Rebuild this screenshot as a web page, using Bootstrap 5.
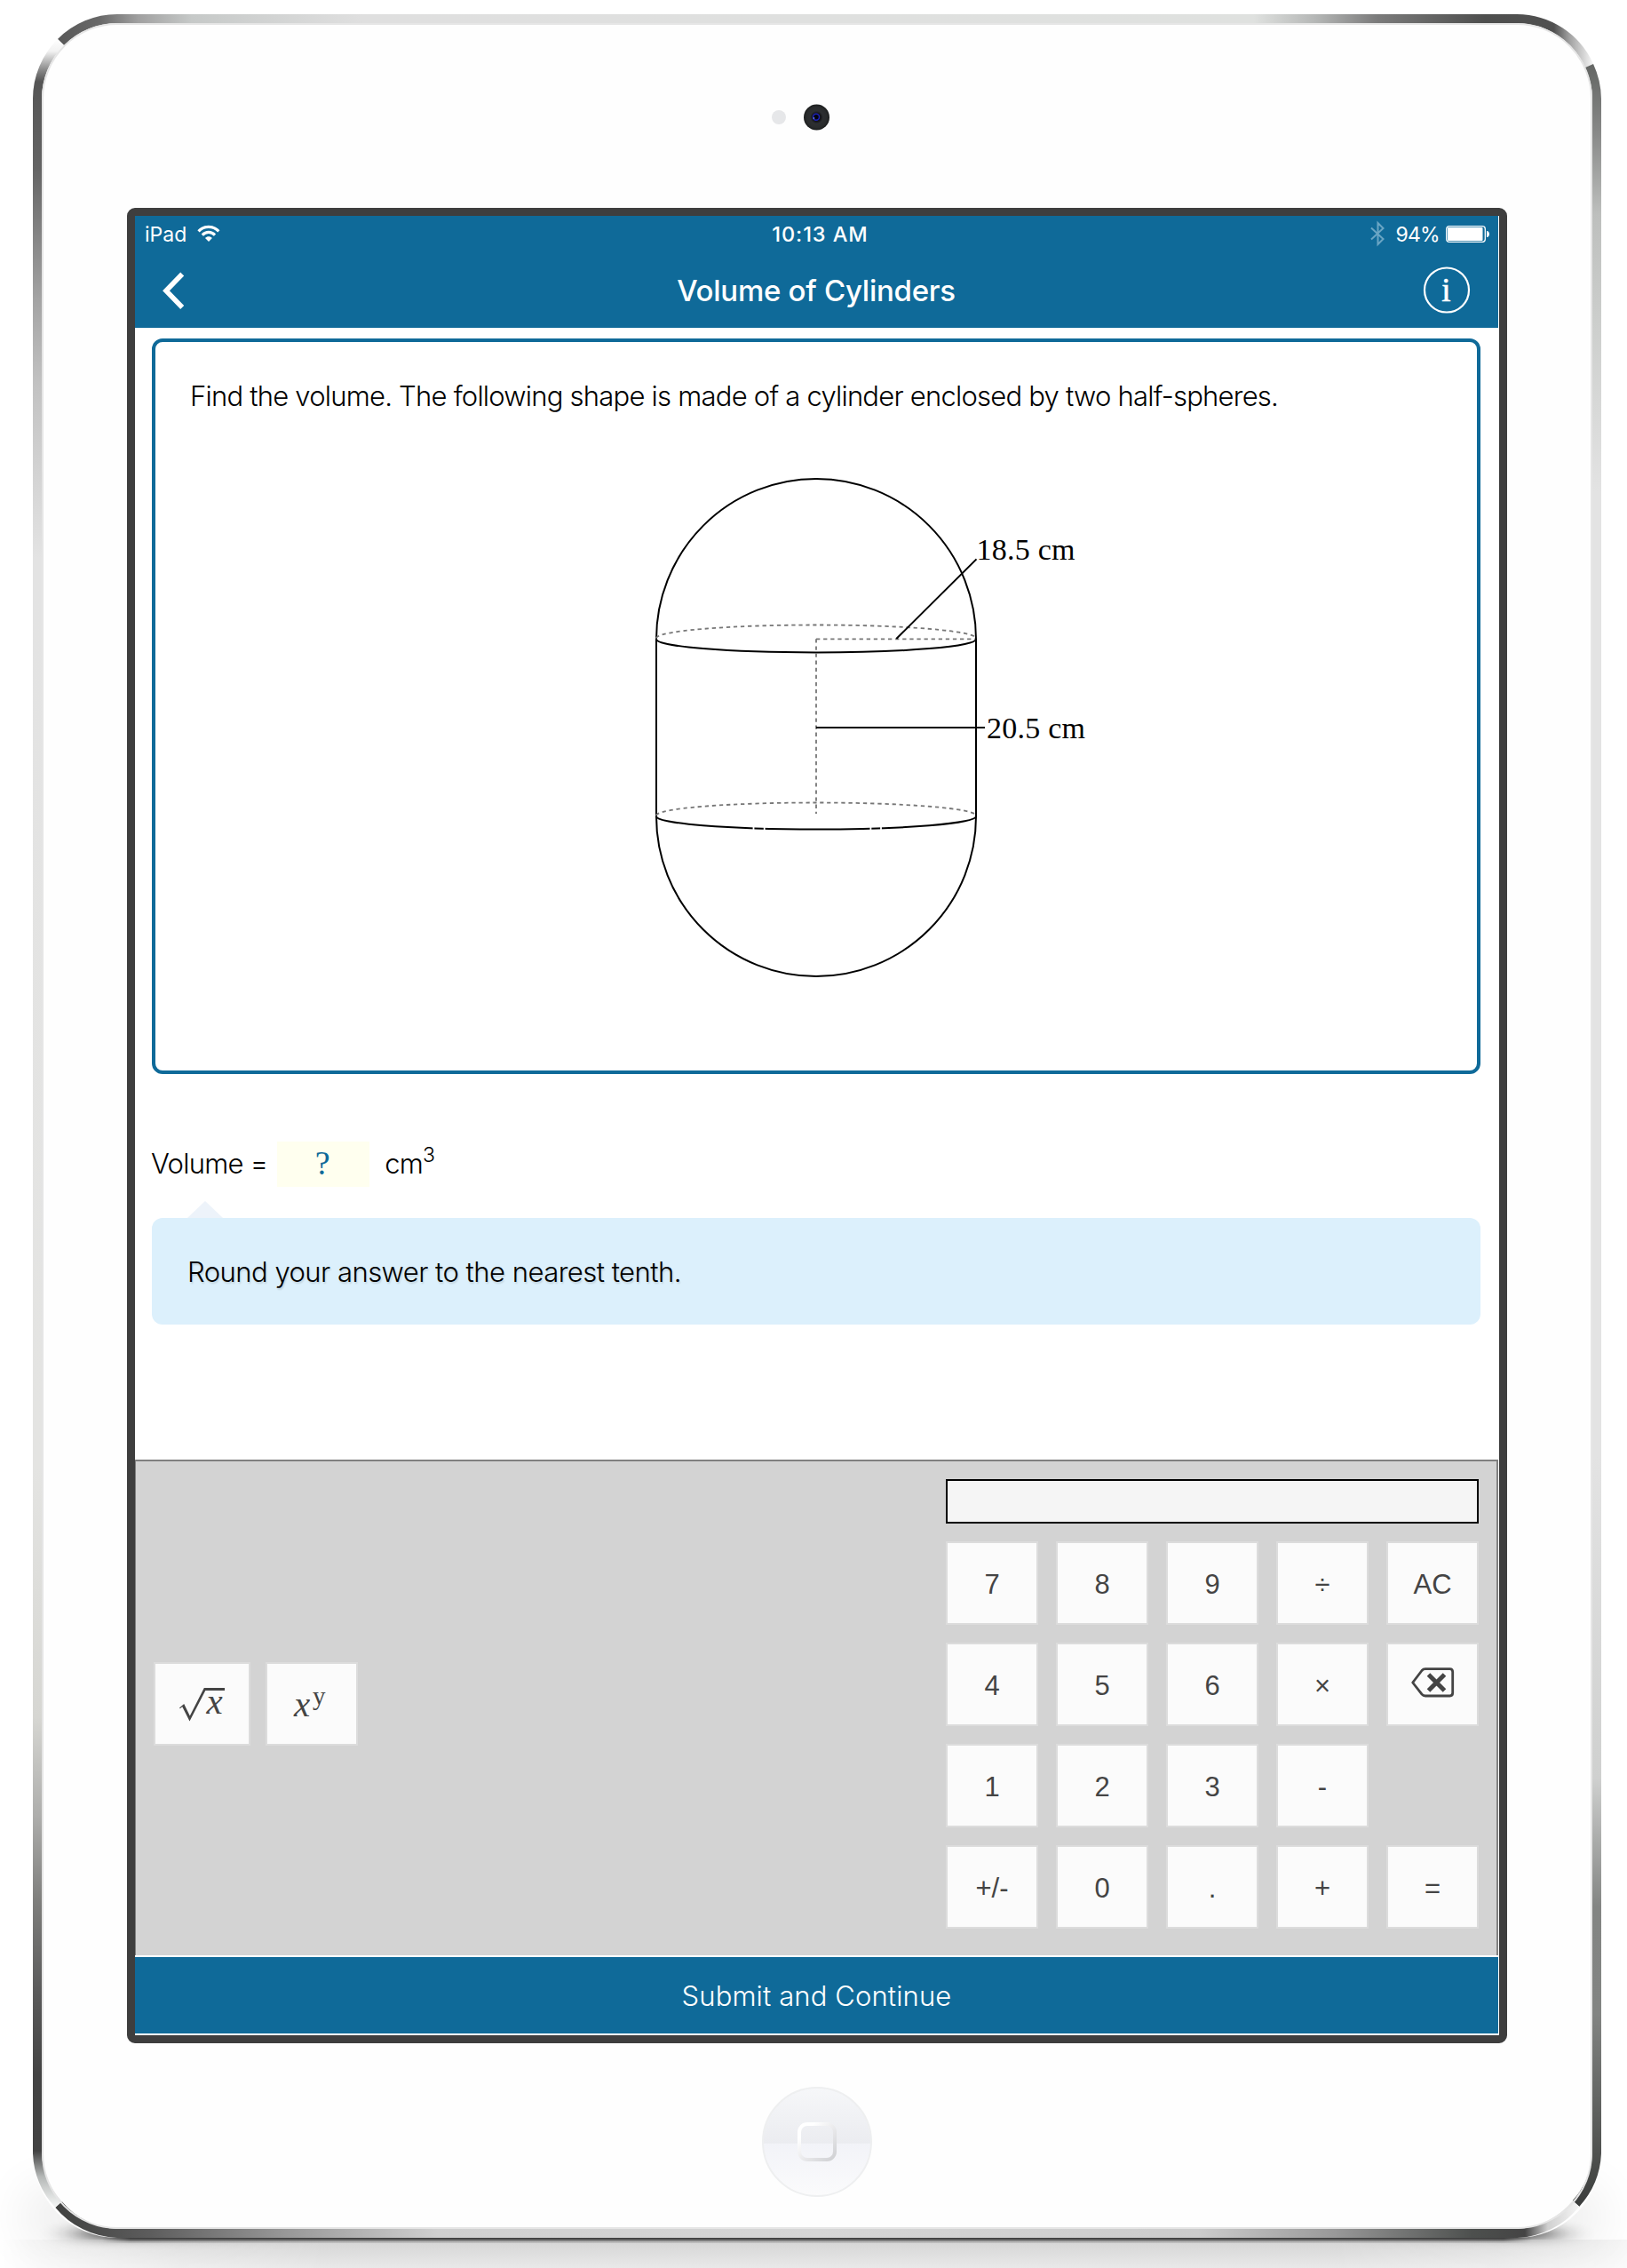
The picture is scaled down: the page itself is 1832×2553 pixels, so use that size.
<!DOCTYPE html>
<html lang="en">
<head>
<meta charset="utf-8">
<meta name="viewport" content="width=device-width, initial-scale=1">
<title>Volume of Cylinders</title>
<link href="https://cdn.jsdelivr.net/npm/bootstrap@5.3.0/dist/css/bootstrap.min.css" rel="stylesheet">
<style>
  :root { --brand: #0f6a99; }
  body { width: 1832px; height: 2553px; background: #fff; color: #000; overflow: hidden;
         font-family: Inter, "Liberation Sans", sans-serif; font-size: 31px; font-weight: 300; line-height: 40px; }
  svg { display: block; flex: none; overflow: visible; }
  .tablet { width: 1832px; height: 2553px; padding-top: 117px; }
  .tablet-shell { position: absolute; inset: 0; z-index: -1; overflow: hidden; }
  .camera { margin-left: 869px; height: 30px; }
  .screen { width: 1554px; height: 2066px; margin: 87px 0 0 143px; background: #fff;
            border: 9px solid #3e3e3e; border-radius: 9px; padding-right: 1px; }
  .home-btn { margin: 49px 0 0 858px; }

  .status { height: 41px; padding: 1px 9px 0 11px; font-size: 23px; font-weight: 400; line-height: 40px; }
  .status > div { flex: 1 1 0; }
  .wifi { margin: 7px 0 0 12px; }
  .bluetooth { margin: 5px 12px 0 0; }
  .battery { margin: 10px 0 0 7px; }
  .percent { letter-spacing: -.7px; }
  .clock { font-size: 23.5px; font-weight: 500; letter-spacing: .95px; padding-left: 6px; }
  .top-nav { height: 85px; padding: 0 31px; }
  .top-nav h1 { font-size: 33px; font-weight: 500; line-height: 40px; letter-spacing: -.27px; }
  .brand-bg { background: var(--brand); color: #fff; }
  .bare { background: none; border: 0; padding: 0; }

  .question { margin: 12px 20px 0 19px; height: 828px; border: 4px solid var(--brand); border-radius: 12px; padding: 41px 0 0 39px; }
  .question p { letter-spacing: -.775px; }
  .question svg { margin: 54px auto 0; transform: translateX(-20px); }
  .dim { font: 34px/1 "Liberation Serif", serif; letter-spacing: .25px; }

  .answer { height: 52px; margin: 75px 0 0 18px; letter-spacing: -.75px; }
  .blank { width: 104px; height: 51px; margin-left: 11px; margin-right: 17px; padding-right: 2px; background: #ffffef; color: var(--brand);
           font: 38px/49px "Liberation Serif", serif; letter-spacing: 0; }
  .cube { font-size: 23px; line-height: 24px; margin: 4px 0 0 0; align-self: flex-start; }
  .hint { position: relative; margin: 35px 20px 0 19px; height: 120px; padding: 2px 0 0 40px; border-radius: 12px;
          background: #dcf0fc; letter-spacing: -.52px; text-shadow: 1px 2px 2px rgba(0,0,0,.13); }
  .hint::before { content: ""; position: absolute; left: 40px; top: -19px;
          border: solid transparent; border-width: 0 20px 19px; border-bottom-color: #edf3fa; }

  .keyboard { margin-top: 152px; height: 558px; background: #d3d3d3; border: solid #808080; border-width: 2px 2px 0 1px; padding: 20px 20px 0 20px; }
  .fn-keys { margin-top: 206px; gap: 17px; }
  .pad { width: 600px; }
  .readout { height: 50px; background: #f5f5f5; border: 2px solid #000; margin-bottom: 20px; }
  .key-grid { display: grid; grid-template-columns: repeat(5, 104px); grid-auto-rows: 94px; gap: 20px; }
  .key { height: 94px; width: 104px; background: #fbfbfb; border: 2px solid #dcdcdc; border-radius: 0; color: #444; padding: 4px 0 0;
         font: 31px/40px "Liberation Sans", sans-serif; }
  .key.drawn { padding: 0; }
  .key.wide { width: 109px; }
  .key svg { margin: 0 auto; }
  .key .erase { margin-top: -5px; }
  .math { font-family: "Liberation Serif", serif; }

  .submit { margin-top: 2px; height: 86px; width: 1535px; border: 0; border-radius: 0; padding: 2px 0 0; font: inherit; letter-spacing: .12px; }
</style>
<script src="https://cdn.jsdelivr.net/npm/bootstrap@5.3.0/dist/js/bootstrap.bundle.min.js"></script>
</head>
<body>
<main class="tablet position-relative d-flex flex-column align-items-start">

  <!-- Metal rim and floor shadow -->
  <svg class="tablet-shell" width="1832" height="2553" viewBox="0 0 1832 2553" fill="none">
    <defs>
      <linearGradient id="rimTop" gradientUnits="userSpaceOnUse" x1="60" y1="0" x2="1793" y2="0">
        <stop offset="0" stop-color="#575757"/><stop offset=".03" stop-color="#686868"/><stop offset=".055" stop-color="#a0a0a0"/><stop offset=".09" stop-color="#c6c9c8"/><stop offset=".2" stop-color="#dfdfdf"/>
        <stop offset=".78" stop-color="#dfe1df"/><stop offset=".82" stop-color="#b5b7b6"/><stop offset=".86" stop-color="#7b7b7b"/><stop offset=".93" stop-color="#4e4f4e"/><stop offset=".975" stop-color="#505050"/><stop offset=".985" stop-color="#a0a0a0"/><stop offset="1" stop-color="#f4f4f4"/>
      </linearGradient>
      <linearGradient id="rimRight" gradientUnits="userSpaceOnUse" x1="0" y1="72" x2="0" y2="2484">
        <stop offset="0" stop-color="#636563"/><stop offset=".03" stop-color="#858685"/><stop offset=".07" stop-color="#bdbfbd"/><stop offset=".12" stop-color="#cccecc"/><stop offset=".2" stop-color="#e3e3e3"/>
        <stop offset=".65" stop-color="#e3e3e3"/><stop offset=".8" stop-color="#cfd0cf"/><stop offset=".86" stop-color="#838583"/><stop offset=".91" stop-color="#828482"/><stop offset=".97" stop-color="#535553"/><stop offset="1" stop-color="#3b3d3c"/>
      </linearGradient>
      <linearGradient id="rimBottom" gradientUnits="userSpaceOnUse" x1="65" y1="0" x2="1777" y2="0">
        <stop offset="0" stop-color="#414241"/><stop offset=".06" stop-color="#5c5c5c"/><stop offset=".15" stop-color="#989898"/><stop offset=".25" stop-color="#d0d0d0"/><stop offset=".5" stop-color="#d6d6d6"/>
        <stop offset=".75" stop-color="#cccccc"/><stop offset=".84" stop-color="#999"/><stop offset=".93" stop-color="#4d504e"/><stop offset=".965" stop-color="#444"/><stop offset=".98" stop-color="#d0d0d0"/><stop offset="1" stop-color="#f4f4f4"/>
      </linearGradient>
      <linearGradient id="rimLeft" gradientUnits="userSpaceOnUse" x1="0" y1="43" x2="0" y2="2482">
        <stop offset="0" stop-color="#fff"/><stop offset=".006" stop-color="#f2f2f2"/><stop offset=".015" stop-color="#858585"/><stop offset=".02" stop-color="#555"/><stop offset=".06" stop-color="#646464"/><stop offset=".12" stop-color="#a3a3a3"/><stop offset=".16" stop-color="#c2c2c2"/><stop offset=".24" stop-color="#e3e3e3"/>
        <stop offset=".66" stop-color="#e4e4e2"/><stop offset=".775" stop-color="#d6d6d2"/><stop offset=".82" stop-color="#aeaeac"/><stop offset=".86" stop-color="#7e7e7c"/><stop offset=".9" stop-color="#5c5c5c"/><stop offset=".94" stop-color="#434343"/><stop offset=".975" stop-color="#424242"/><stop offset=".987" stop-color="#b5b8b7"/><stop offset="1" stop-color="#f0f2f1"/>
      </linearGradient>
      <linearGradient id="floor" x1="0" y1="0" x2="0" y2="1"><stop offset="0" stop-color="#d4d4d4"/><stop offset="1" stop-color="#e9e9e9"/></linearGradient>
      <linearGradient id="fade" x1="0" y1="0" x2="1" y2="0"><stop offset="0" stop-color="#000"/><stop offset=".05" stop-color="#555"/><stop offset=".11" stop-color="#bbb"/><stop offset=".2" stop-color="#fff"/><stop offset=".82" stop-color="#fff"/><stop offset=".92" stop-color="#bbb"/><stop offset="1" stop-color="#333"/></linearGradient>
      <mask id="floorMask"><rect y="2300" width="1832" height="253" fill="url(#fade)"/></mask>
      <filter id="soft" x="-20%" y="-300%" width="140%" height="700%"><feGaussianBlur stdDeviation="24 6"/></filter>
      <filter id="wide" x="-20%" y="-100%" width="140%" height="300%"><feGaussianBlur stdDeviation="28 30"/></filter>
      <linearGradient id="line" x1="0" y1="0" x2="1" y2="0"><stop offset="0" stop-color="#444" stop-opacity="0"/><stop offset=".02" stop-color="#444"/><stop offset=".98" stop-color="#444"/><stop offset="1" stop-color="#444" stop-opacity="0"/></linearGradient>
    </defs>
    <rect x="30" y="2470" width="1772" height="50" fill="#000" opacity=".09" filter="url(#wide)"/>
    <rect x="95" y="2509" width="1650" height="11" fill="#000" opacity=".95" filter="url(#soft)"/>
    <rect y="2521" width="1832" height="32" fill="url(#floor)" mask="url(#floorMask)"/>
    <rect x="37" y="16" width="1766" height="2503" rx="95" fill="#fefefe"/>
    <rect x="115" y="2518.500" width="1610" height="2.500" fill="url(#line)"/>
    <rect x="115" y="2521" width="1610" height="2" fill="url(#line)" opacity=".6"/>
    <rect x="115" y="2523" width="1610" height="2" fill="url(#line)" opacity=".18"/>
    <g stroke-width="10">
      <path d="M68.500 47.500A90 90 0 0 1 132 21H1708A90 90 0 0 1 1789.500 74" stroke="url(#rimTop)"/>
      <path d="M1789.500 74A90 90 0 0 1 1798 111V2424A90 90 0 0 1 1774.500 2480.500" stroke="url(#rimRight)"/>
      <path d="M1774.500 2480.500A90 90 0 0 1 1708 2514H132A90 90 0 0 1 66 2481.500" stroke="url(#rimBottom)"/>
      <path d="M66 2481.500A90 90 0 0 1 42 2424V111A90 90 0 0 1 68.500 47.500" stroke="url(#rimLeft)"/>
    </g>
    <rect x="48" y="27" width="1744" height="2481" rx="84" stroke="#e6e6e6" stroke-width="2"/>
  </svg>

  <svg class="camera" width="66" height="30" viewBox="869 117 66 30">
    <defs><radialGradient id="lens"><stop offset="0" stop-color="#05051c"/><stop offset=".3" stop-color="#111116"/><stop offset=".5" stop-color="#2d2f31"/><stop offset=".8" stop-color="#292b2c"/><stop offset="1" stop-color="#1a1c1c"/></radialGradient></defs>
    <circle cx="877" cy="132" r="8" fill="#e6e7e9"/>
    <circle cx="919.500" cy="132" r="14.500" fill="url(#lens)"/>
    <circle cx="919" cy="131.800" r="3.500" fill="#03030f" stroke="#1d22b8" stroke-width="1.500"/>
    <circle cx="916.500" cy="133" r=".8" fill="#9ab4ff"/>
  </svg>

  <div class="screen">
    <header class="brand-bg">
      <div class="status d-flex">
        <div class="d-flex">
          <span>iPad</span>
          <svg class="wifi" width="26" height="22" viewBox="0 0 26 22" fill="none" stroke="#fff">
            <path d="M1.500 9.300C8 2.700 17.600 2.700 24.300 9.300" stroke-width="3.200"/>
            <path d="M5.800 13.600C10 9.400 15.800 9.400 20 13.600" stroke-width="3.200"/>
            <path d="M9 17C11.200 14.700 14.700 14.700 16.900 17L13 21Z" fill="#fff" stroke="none"/>
          </svg>
        </div>
        <div class="clock text-center">10:13 AM</div>
        <div class="d-flex justify-content-end">
          <svg class="bluetooth" width="16" height="28" viewBox="0 0 16 28" fill="none" stroke="#6aa5c4" stroke-width="2"><path d="M1 7.500L14.500 20L8.500 26V2L14.500 8L1 20.500"/></svg>
          <span class="percent">94%</span>
          <svg class="battery" width="50" height="19" viewBox="0 0 50 19"><rect x=".7" y=".7" width="43.600" height="17.600" rx="3" fill="none" stroke="#fff" stroke-width="1.300"/><rect x="2" y="2" width="39.500" height="15" rx="1" fill="#fff"/><path d="M46 6C50 6 50 13 46 13Z" fill="#fff"/></svg>
        </div>
      </div>
      <nav class="top-nav d-flex align-items-center justify-content-between">
        <button class="bare" aria-label="Back"><svg width="52" height="42" viewBox="0 0 52 42" fill="none" stroke="#fff"><path d="M22.200 2.500L4 21.300L22.200 40" stroke-width="5.600"/></svg></button>
        <h1 class="m-0">Volume of Cylinders</h1>
        <button class="bare" aria-label="Information"><svg width="53" height="53" viewBox="0 0 53 53"><circle cx="26" cy="26.500" r="25" fill="none" stroke="#fff" stroke-width="2.200"/><text x="25.500" y="39" text-anchor="middle" font-family="Liberation Serif, serif" font-size="37" fill="#fff" stroke="#fff" stroke-width=".6">i</text></svg></button>
      </nav>
    </header>

    <section class="question">
      <p class="m-0">Find the volume. The following shape is made of a cylinder enclosed by two half-spheres.</p>
      <svg width="640" height="590" viewBox="599 520 640 590" fill="none" stroke="#000" stroke-width="2">
        <path d="M739 719.500A180 180.500 0 0 1 1099 719.500V919A180 180 0 0 1 739 919Z"/>
        <path d="M740 719.500H1098" stroke="#fff" stroke-width="4"/>
        <path d="M739 719.500A180 15 0 0 0 1099 719.500M739 919A180 14.500 0 0 0 1099 919"/>
        <path d="M848.500 929V937M860.700 929V937M980.400 929V937M992 929V937" stroke="#fff" stroke-width="1.800"/>
        <g stroke="#777" stroke-width="1.800" stroke-dasharray="4.300 3.800">
          <path d="M739 718.500A180 15 0 0 1 1099 718.500"/>
          <path d="M739 918A180 14.500 0 0 1 1099 918"/>
          <path d="M919 719.300H1098"/>
          <path d="M919 719.300V916"/>
        </g>
        <path d="M1009.300 719L1099.500 629.400M919 819H1109"/>
        <g class="dim" fill="#000" stroke="none"><text x="1099.500" y="630">18.5 cm</text><text x="1111" y="830.500">20.5 cm</text></g>
      </svg>
    </section>

    <section class="answer d-flex align-items-center">
      <span>Volume =</span>
      <span class="blank text-center">?</span>
      <span>cm</span><span class="cube">3</span>
    </section>
    <aside class="hint d-flex align-items-center">Round your answer to the nearest tenth.</aside>

    <section class="keyboard d-flex justify-content-between">
      <div class="fn-keys d-flex align-items-start">
        <button class="key drawn wide"><svg width="70" height="66" viewBox="193 1885 70 66" fill="#444"><path d="M202 1922.500L207.200 1918L213.800 1931.500L229.800 1900H253V1903H231.300L213.500 1937.500L205.300 1921.300L202.700 1923.300Z"/><text class="math" x="232.500" y="1928.500" font-size="41" font-style="italic">x</text></svg></button>
        <button class="key drawn"><svg width="70" height="66" viewBox="316 1885 70 66" fill="#444"><text class="math" x="331" y="1932" font-size="41" font-style="italic">x</text><text class="math" x="352" y="1919" font-size="29">y</text></svg></button>
      </div>
      <div class="pad">
        <div class="readout"></div>
        <div class="key-grid">
          <button class="key">7</button><button class="key">8</button><button class="key">9</button><button class="key">÷</button><button class="key">AC</button>
          <button class="key">4</button><button class="key">5</button><button class="key">6</button><button class="key">×</button>
          <button class="key drawn" aria-label="Delete"><svg class="erase" width="50" height="36" viewBox="1588 1876 50 36" fill="none" stroke="#444" stroke-linejoin="round"><path d="M1590.700 1894L1601 1880.500Q1602.500 1878.700 1605 1878.700H1632.500Q1635.700 1878.700 1635.700 1882V1905.500Q1635.700 1909 1632.500 1909H1605Q1602.500 1909 1601 1907.200Z" stroke-width="2.800"/><path d="M1608.500 1885L1626.500 1903M1626.500 1885L1608.500 1903" stroke-width="5"/></svg></button>
          <button class="key">1</button><button class="key">2</button><button class="key">3</button><button class="key">-</button><span></span>
          <button class="key">+/-</button><button class="key">0</button><button class="key">.</button><button class="key">+</button><button class="key">=</button>
        </div>
      </div>
    </section>
    <button class="submit brand-bg d-block">Submit and Continue</button>
  </div>

  <svg class="home-btn" width="124" height="124" viewBox="0 0 124 124" fill="none">
    <defs>
      <linearGradient id="btnFace" x1="0" y1="0" x2="0" y2="1"><stop offset="0" stop-color="#f6f7f9"/><stop offset=".51" stop-color="#ebecf0"/><stop offset=".52" stop-color="#f2f3f8"/><stop offset="1" stop-color="#fbfbfc"/></linearGradient>
      <linearGradient id="btnMark" x1="0" y1="0" x2="1" y2="1"><stop offset=".2" stop-color="#fff"/><stop offset=".55" stop-color="#e9e9eb"/><stop offset="1" stop-color="#cfd0d3"/></linearGradient>
    </defs>
    <circle cx="62" cy="62" r="61" fill="url(#btnFace)" stroke="#eeeff0" stroke-width="2"/>
    <rect x="42" y="42" width="40" height="40" rx="9" stroke="url(#btnMark)" stroke-width="4"/>
  </svg>
</main>
</body>
</html>
